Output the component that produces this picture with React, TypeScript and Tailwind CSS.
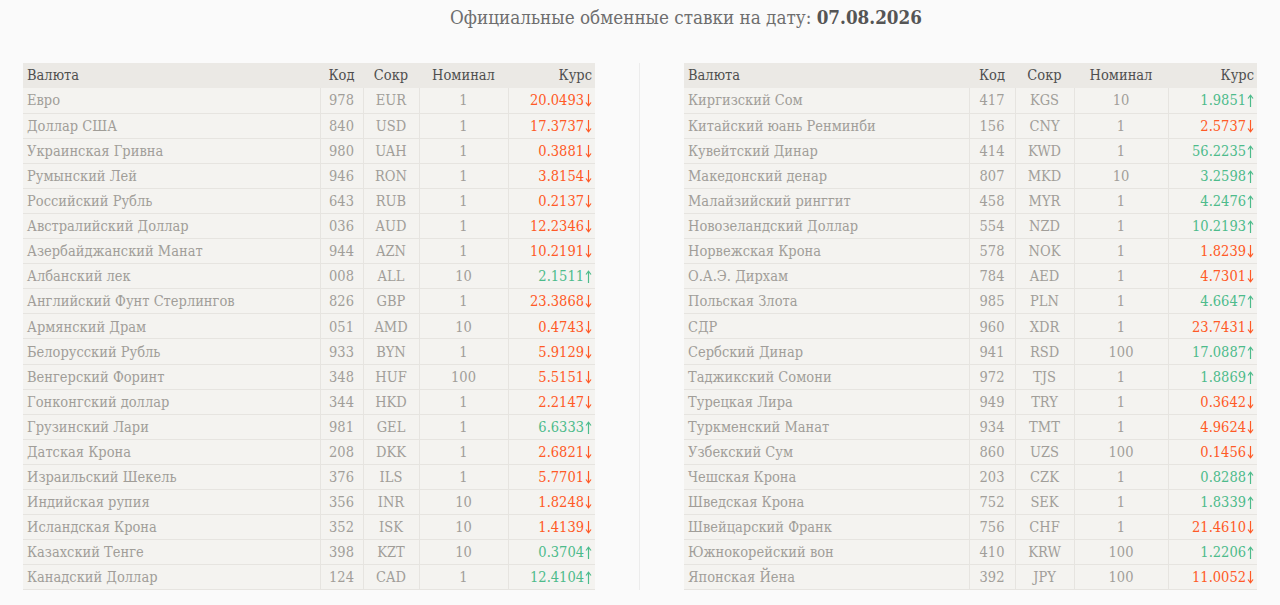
const left: [string, string, string, string, string, boolean][] = [
  ["Евро", "978", "EUR", "1", "20.0493", false],
  ["Доллар США", "840", "USD", "1", "17.3737", false],
  ["Украинская Гривна", "980", "UAH", "1", "0.3881", false],
  ["Румынский Лей", "946", "RON", "1", "3.8154", false],
  ["Российский Рубль", "643", "RUB", "1", "0.2137", false],
  ["Австралийский Доллар", "036", "AUD", "1", "12.2346", false],
  ["Азербайджанский Манат", "944", "AZN", "1", "10.2191", false],
  ["Албанский лек", "008", "ALL", "10", "2.1511", true],
  ["Английский Фунт Стерлингов", "826", "GBP", "1", "23.3868", false],
  ["Армянский Драм", "051", "AMD", "10", "0.4743", false],
  ["Белорусский Рубль", "933", "BYN", "1", "5.9129", false],
  ["Венгерский Форинт", "348", "HUF", "100", "5.5151", false],
  ["Гонконгский доллар", "344", "HKD", "1", "2.2147", false],
  ["Грузинский Лари", "981", "GEL", "1", "6.6333", true],
  ["Датская Крона", "208", "DKK", "1", "2.6821", false],
  ["Израильский Шекель", "376", "ILS", "1", "5.7701", false],
  ["Индийская рупия", "356", "INR", "10", "1.8248", false],
  ["Исландская Крона", "352", "ISK", "10", "1.4139", false],
  ["Казахский Тенге", "398", "KZT", "10", "0.3704", true],
  ["Канадский Доллар", "124", "CAD", "1", "12.4104", true],
];

const right: [string, string, string, string, string, boolean][] = [
  ["Киргизский Сом", "417", "KGS", "10", "1.9851", true],
  ["Китайский юань Ренминби", "156", "CNY", "1", "2.5737", false],
  ["Кувейтский Динар", "414", "KWD", "1", "56.2235", true],
  ["Македонский денар", "807", "MKD", "10", "3.2598", true],
  ["Малайзийский ринггит", "458", "MYR", "1", "4.2476", true],
  ["Новозеландский Доллар", "554", "NZD", "1", "10.2193", true],
  ["Норвежская Крона", "578", "NOK", "1", "1.8239", false],
  ["О.А.Э. Дирхам", "784", "AED", "1", "4.7301", false],
  ["Польская Злота", "985", "PLN", "1", "4.6647", true],
  ["СДР", "960", "XDR", "1", "23.7431", false],
  ["Сербский Динар", "941", "RSD", "100", "17.0887", true],
  ["Таджикский Сомони", "972", "TJS", "1", "1.8869", true],
  ["Турецкая Лира", "949", "TRY", "1", "0.3642", false],
  ["Туркменский Манат", "934", "TMT", "1", "4.9624", false],
  ["Узбекский Сум", "860", "UZS", "100", "0.1456", false],
  ["Чешская Крона", "203", "CZK", "1", "0.8288", true],
  ["Шведская Крона", "752", "SEK", "1", "1.8339", true],
  ["Швейцарский Франк", "756", "CHF", "1", "21.4610", false],
  ["Южнокорейский вон", "410", "KRW", "100", "1.2206", true],
  ["Японская Йена", "392", "JPY", "100", "11.0052", false],
];

// стрелка изменения курса
const Arrow = ({ up }: { up: boolean }) => (
  <svg
    viewBox="0 0 7 13"
    className={"ml-[1px] inline-block h-[13px] w-[7px] align-[-2px] " + (up ? "" : "rotate-180")}
    fill="none"
    stroke="currentColor"
    strokeWidth="1.2"
  >
    <path d="M3.5 1.5V13" />
    <path d="M1 4.5L3.5 1.2L6 4.5" />
  </svg>
);

// ширины колонок: валюта, код, сокр, номинал, курс
const RateTable = ({
  rows,
  cols,
}: {
  rows: [string, string, string, string, string, boolean][];
  cols: string[];
}) => {
  return (
    <table className="table-fixed border-collapse text-[14.5px]">
      <colgroup>
        {cols.map((c, i) => (
          <col key={i} className={c} />
        ))}
      </colgroup>
      <thead>
        <tr className="h-[25px] bg-[#ebe9e5] text-[#4f4f4f]">
          <th className="pl-[4px] text-left font-normal">Валюта</th>
          <th className="text-center font-normal">Код</th>
          <th className="text-center font-normal">Сокр</th>
          <th className="text-center font-normal">Номинал</th>
          <th className="pr-[3px] text-right font-normal">Курс</th>
        </tr>
      </thead>
      <tbody className="bg-[#f4f3f0] text-[#a19e99]">
        {rows.map(([name, code, iso, nom, rate, up]) => (
          <tr key={iso} className="h-[25.1px] border-b border-[#e6e4e0]">
            <td className="pl-[4px] pt-[2px] text-left">{name}</td>
            <td className="border-l border-[#e6e4e0] pt-[2px] text-center">{code}</td>
            <td className="border-l border-[#e6e4e0] pt-[2px] text-center">{iso}</td>
            <td className="border-l border-[#e6e4e0] pt-[2px] text-center">{nom}</td>
            <td
              className={
                "border-l border-[#e6e4e0] pr-[3px] pt-[2px] text-right " +
                (up ? "text-[#4dbb8b]" : "text-[#ff5a26]")
              }
            >
              {rate}
              <Arrow up={up} />
            </td>
          </tr>
        ))}
      </tbody>
    </table>
  );
};

export default function App() {
  return (
    <div
      className="min-h-[605px] bg-[#fafafa]"
      style={{ fontFamily: '"DejaVu Serif Condensed", "DejaVu Serif", serif' }}
    >
      <h1 className="flex justify-center pl-[92px] pt-[5px] text-[18.7px] leading-[24px] text-[#6e6e6e]">
        <span>
          Официальные обменные ставки на дату:{" "}
          <b className="font-bold text-[#555]">07.08.2026</b>
        </span>
      </h1>
      <div className="mt-[33px] flex px-[23px]">
        <RateTable
          rows={left}
          cols={["w-[297px]", "w-[43px]", "w-[56px]", "w-[89px]", "w-[87px]"]}
        />
        <div className="flex flex-1 justify-center">
          <div className="w-px bg-[#ececec]" />
        </div>
        <RateTable
          rows={right}
          cols={["w-[285px]", "w-[46px]", "w-[59px]", "w-[94px]", "w-[89px]"]}
        />
      </div>
    </div>
  );
}
